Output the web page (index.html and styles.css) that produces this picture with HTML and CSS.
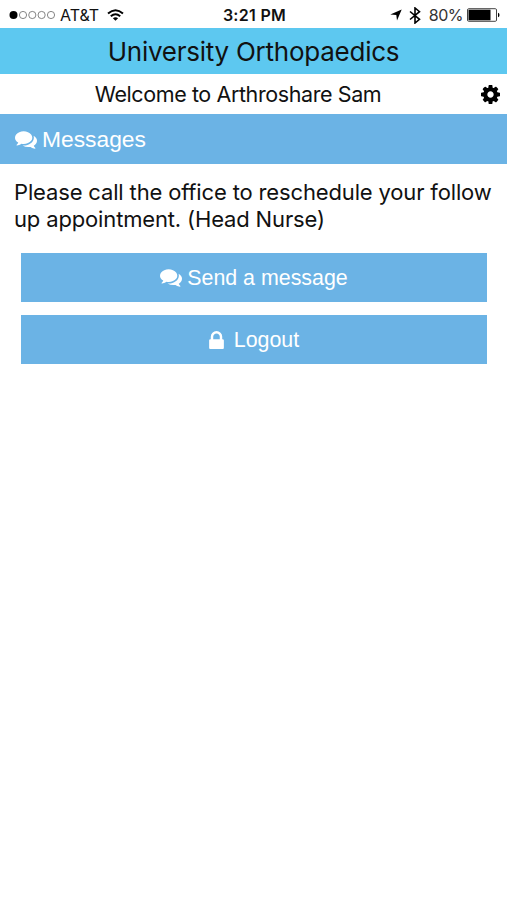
FILE: index.html
```html
<!DOCTYPE html>
<html lang="en">
<head>
    <meta charset="UTF-8">
    <meta name="viewport" content="width=device-width, initial-scale=1.0">
    <title>University Orthopaedics</title>
    <link rel="stylesheet" href="styles.css">
</head>
<body>
    <svg class="symbols" width="0" height="0">
        <symbol id="comments" viewBox="0 256 1792 1408">
            <path d="M1408 768q0 139-94 257t-256.5 186.5-353.5 68.5q-86 0-176-16-124 88-278 128-36 9-86 16h-3q-11 0-20.5-8t-11.5-21q-1-3-1-6.5t.5-6.5 2-6l2.5-5 3.500-5.500 4-5 4.500-5 4-4.500q5-6 23-25t26-29.500 22.500-29 25-38.500 20.500-44q-124-72-195-177t-71-224q0-139 94-257t256.500-186.500 353.500-68.500 353.500 68.500 256.500 186.500 94 257zm384 256q0 120-71 224.500t-195 176.500q10 24 20.500 44t25 38.500 22.500 29 26 29.500 23 25q1 1 4 4.500t4.500 5 4 5 3.500 5.500l2.500 5 2 6 .5 6.500-1 6.500q-3 14-13 22t-22 7q-50-7-86-16-154-40-278-128-90 16-176 16-271 0-472-132 58 4 88 4 161 0 309-45t264-129q125-92 192-212t67-254q0-77-23-152 129 71 204 178t75 230z"/>
        </symbol>
    </svg>

    <div class="status-bar">
        <div class="status-left">
            <svg class="signal" viewBox="0 0 47 10">
                <circle cx="4.500" cy="5" r="4"/>
                <g fill="none" stroke="#666" stroke-width="0.8">
                    <circle cx="14" cy="5" r="3.600"/>
                    <circle cx="23.300" cy="5" r="3.600"/>
                    <circle cx="32.600" cy="5" r="3.600"/>
                    <circle cx="42" cy="5" r="3.600"/>
                </g>
            </svg>
            <span class="carrier">AT&amp;T</span>
            <svg class="wifi" viewBox="0 0 17 12">
                <g fill="none" stroke="#000" stroke-width="2">
                    <path d="M1 4.500Q8.500-2 16 4.500"/>
                    <path d="M3.800 7.300Q8.500 3.300 13.200 7.300"/>
                </g>
                <path d="M8.500 11.700L5.900 9.200Q8.500 7.200 11.100 9.200z"/>
            </svg>
        </div>
        <span class="time">3:21 PM</span>
        <div class="status-right">
            <svg class="location" viewBox="0 0 12 12">
                <path d="M11.700.4L7 11.600 6.300 5.900.3 5.500z"/>
            </svg>
            <svg class="bluetooth" viewBox="0 0 12 17">
                <path d="M1 4.500L10.500 12.300 6 16V1L10.500 4.700 1 12.500" fill="none" stroke="#000" stroke-width="1.600"/>
            </svg>
            <span class="percent">80%</span>
            <svg class="battery" viewBox="0 0 33 14">
                <rect x=".5" y=".7" width="29" height="12.600" rx="1.200" fill="none" stroke="#444"/>
                <rect x="1.500" y="1.700" width="22" height="10.600"/>
                <path d="M31 4.800q1.500.5 1.500 2.200t-1.500 2.200z"/>
            </svg>
        </div>
    </div>

    <h1>University Orthopaedics</h1>

    <div class="welcome">
        <span class="welcome-text">Welcome to Arthroshare Sam</span>
        <svg class="cog" viewBox="128 128 1536 1536">
            <path d="M1152 896q0-106-75-181t-181-75-181 75-75 181 75 181 181 75 181-75 75-181zm512-109v222q0 12-8 23t-20 13l-185 28q-19 54-39 91 35 50 107 138 10 12 10 25t-9 23q-27 37-99 108t-94 71q-12 0-26-9l-138-108q-44 23-91 38-16 136-29 186-7 28-36 28h-222q-14 0-24.500-8.500t-11.500-21.500l-28-184q-49-16-90-37l-141 107q-10 9-25 9-14 0-25-11-126-114-165-168-7-10-7-23 0-12 8-23 15-21 51-66.500t54-70.500q-27-50-41-99l-183-27q-13-2-21-12.500t-8-23.500v-222q0-12 8-23t19-13l186-28q14-46 39-92-40-57-107-138-10-12-10-24 0-10 9-23 26-36 98.500-107.500t94.500-71.500q13 0 26 10l138 107q44-23 91-38 16-136 29-186 7-28 36-28h222q14 0 24.500 8.500t11.500 21.500l28 184q49 16 90 37l142-107q9-9 24-9 13 0 25 10 129 119 165 170 7 8 7 22 0 12-8 23-15 21-51 66.500t-54 70.500q26 50 41 98l183 28q13 2 21 12.500t8 23.500z"/>
        </svg>
    </div>

    <h2>
        <svg class="comments"><use href="#comments"/></svg>
        <span>Messages</span>
    </h2>

    <p class="message">Please call the office to reschedule your follow up appointment. (Head Nurse)</p>

    <div class="actions">
        <button class="send">
            <svg class="comments"><use href="#comments"/></svg>
            <span>Send a message</span>
        </button>
        <button class="logout">
            <svg class="lock" viewBox="320 128 1152 1408">
                <path d="M640 768h512v-192q0-106-75-181t-181-75-181 75-75 181v192zm832 96v576q0 40-28 68t-68 28h-960q-40 0-68-28t-28-68v-576q0-40 28-68t68-28h32v-192q0-184 132-316t316-132 316 132 132 316v192h32q40 0 68 28t28 68z"/>
            </svg>
            <span>Logout</span>
        </button>
    </div>
</body>
</html>
```

FILE: styles.css
```css
* {
    box-sizing: border-box;
}
body {
    margin: 0;
    background-color: #fff;
    color: #111;
    font-family: Inter, sans-serif;
}
svg {
    flex: none;
}
.symbols {
    display: block;
}
.status-bar {
    display: grid;
    grid-template-columns: 1fr auto 1fr;
    align-items: center;
    height: 28px;
    padding: 2px 7px 0 9px;
    font-size: 16px;
}
.status-left,
.status-right {
    display: flex;
    align-items: center;
}
.status-right {
    justify-content: flex-end;
}
.signal {
    width: 47px;
    height: 10px;
}
.carrier {
    margin: 0 8px 0 4px;
}
.wifi {
    width: 17px;
    height: 12px;
}
.time {
    font-weight: 600;
    letter-spacing: 0.3px;
}
.location {
    width: 12px;
    height: 12px;
    margin-right: 7px;
}
.bluetooth {
    width: 12px;
    height: 17px;
    margin-right: 8px;
}
.percent {
    margin-right: 4px;
    color: #333;
    letter-spacing: -0.5px;
}
.battery {
    width: 33px;
    height: 14px;
}
h1 {
    height: 46px;
    margin: 0;
    background-color: #5dc8f0;
    font-size: 26px;
    font-weight: 400;
    letter-spacing: -0.25px;
    line-height: 47px;
    text-align: center;
}
.welcome {
    display: flex;
    align-items: center;
    height: 40px;
    padding-right: 7px;
}
.welcome-text {
    flex: 1;
    padding-right: 5px;
    font-size: 21.5px;
    letter-spacing: -0.4px;
    text-align: center;
}
.cog {
    width: 19px;
    height: 19px;
}
h2 {
    display: flex;
    align-items: center;
    gap: 5px;
    height: 50px;
    margin: 0;
    padding: 1px 15px 0;
    background-color: #6bb3e5;
    color: #fff;
    font-family: "Liberation Sans", Arial, sans-serif;
    font-size: 22.8px;
    font-weight: 400;
}
.comments {
    width: 22px;
    height: 18px;
    fill: currentColor;
}
.message {
    margin: 0;
    padding: 15px 10px 0 14px;
    font-size: 22px;
    letter-spacing: -0.15px;
    line-height: 27px;
}
.actions {
    display: flex;
    flex-direction: column;
    gap: 13px;
    padding: 20px 20px 0 21px;
}
button {
    display: flex;
    align-items: center;
    justify-content: center;
    gap: 5px;
    height: 49px;
    padding: 1px 0 0;
    border: none;
    background-color: #6bb3e5;
    color: #fff;
    font-family: "Liberation Sans", Arial, sans-serif;
    font-size: 21.4px;
}
.logout {
    gap: 10px;
}
.lock {
    width: 15px;
    height: 18px;
    fill: currentColor;
}
```
